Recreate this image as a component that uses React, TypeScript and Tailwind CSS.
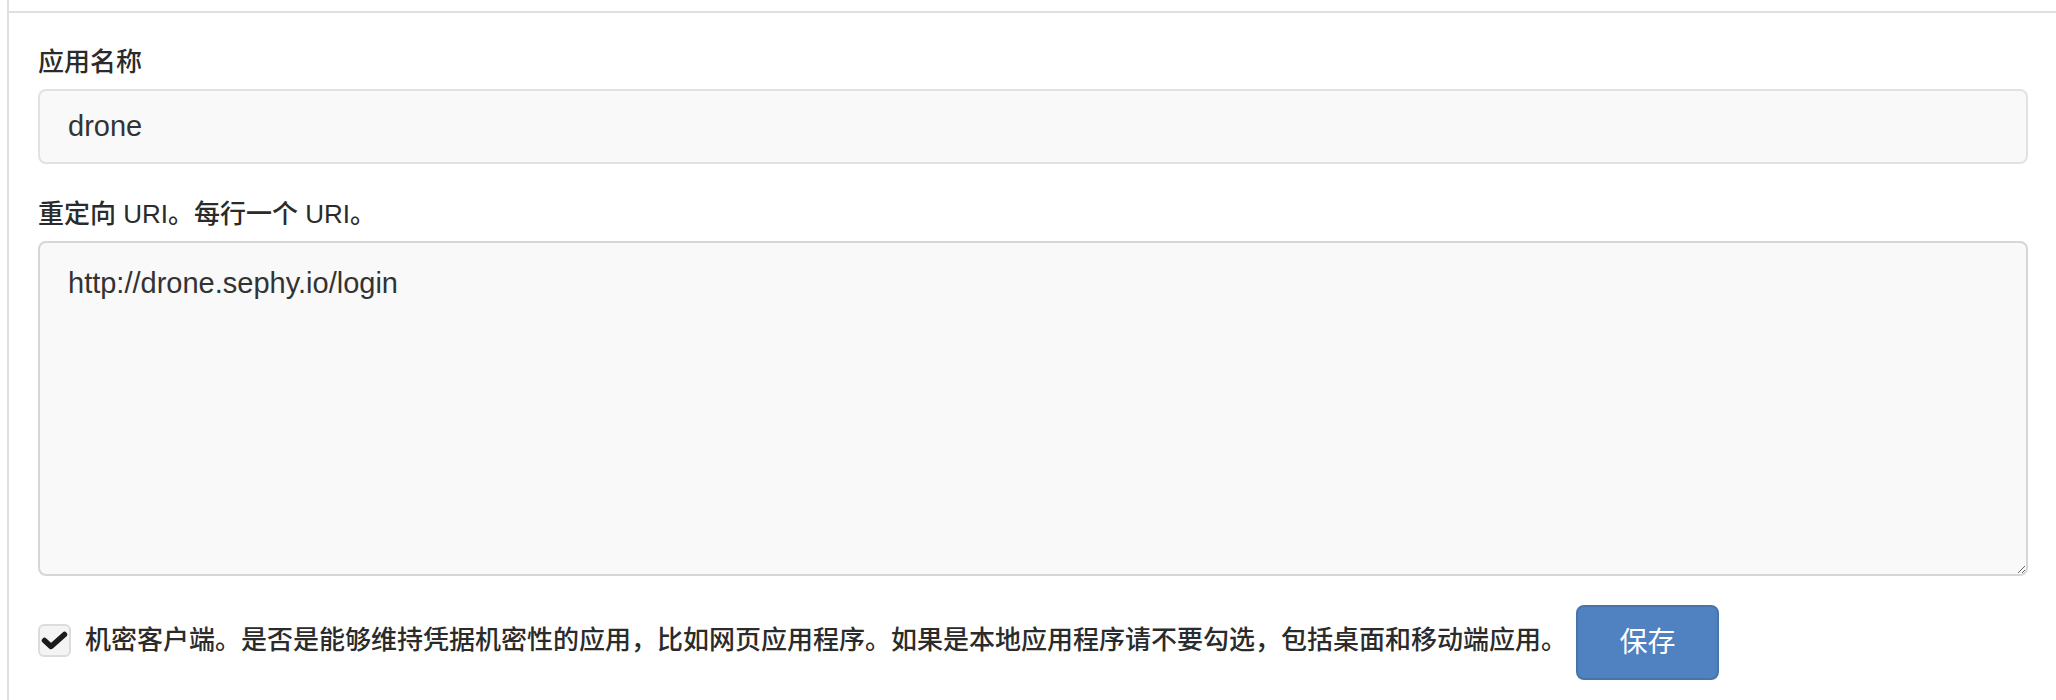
const fontStack = '"Liberation Sans", "Noto Sans CJK SC", sans-serif'

function CheckMark() {
  return (
    <svg width="27" height="19" viewBox="0 0 27 19" fill="none">
      <polyline
        points="3.5,9.5 10,15.5 23.5,3.5"
        stroke="#1b1b1b"
        strokeWidth="5.5"
        strokeLinecap="round"
        strokeLinejoin="round"
      />
    </svg>
  )
}

function App() {
  return (
    <div className="min-h-[700px] bg-white text-[#2b2b2b]" style={{ fontFamily: fontStack }}>
      <div className="ml-[7px] min-h-[700px] border-l-2 border-[#e0e0e0]">
        <div className="h-[11px]" />
        <form className="border-t-2 border-[#e0e0e0] pb-[20px] pl-[29px] pr-[28px] pt-[31px]">
          <div>
            <label className="mb-[9px] block text-[26px] font-medium leading-[36px]">应用名称</label>
            <input
              type="text"
              defaultValue="drone"
              className="block h-[75px] w-full rounded-[8px] border-2 border-[#e2e2e2] bg-[#f9f9f9] px-[28px] text-[29px] text-[#333] outline-none"
            />
          </div>

          <div className="mt-[32px]">
            <label className="mb-[9px] block text-[26px] font-medium leading-[36px]">
              重定向 URI。每行一个 URI。
            </label>
            <textarea
              defaultValue="http://drone.sephy.io/login"
              className="block h-[335px] w-full rounded-[8px] border-2 border-[#d6d6d6] bg-[#f9f9f9] px-[28px] pt-[20px] text-[29px] leading-[40px] text-[#333] outline-none"
            />
          </div>

          <div className="mt-[29px] flex items-center">
            <label className="mb-[5px] flex items-center gap-[14px]">
              <span className="flex h-[33px] w-[33px] items-center justify-center rounded-[6px] border-2 border-[#dcdcdc] bg-[#f4f4f4]">
                <CheckMark />
              </span>
              <span className="text-[26px] font-medium leading-[36px]">
                机密客户端。是否是能够维持凭据机密性的应用，比如网页应用程序。如果是本地应用程序请不要勾选，包括桌面和移动端应用。
              </span>
            </label>
            <button
              type="button"
              className="ml-[9px] h-[75px] w-[143px] rounded-[8px] border-2 border-[#4873ab] bg-[#5081c0] text-[28px] text-white"
            >
              保存
            </button>
          </div>
        </form>
      </div>
    </div>
  )
}

export default App
